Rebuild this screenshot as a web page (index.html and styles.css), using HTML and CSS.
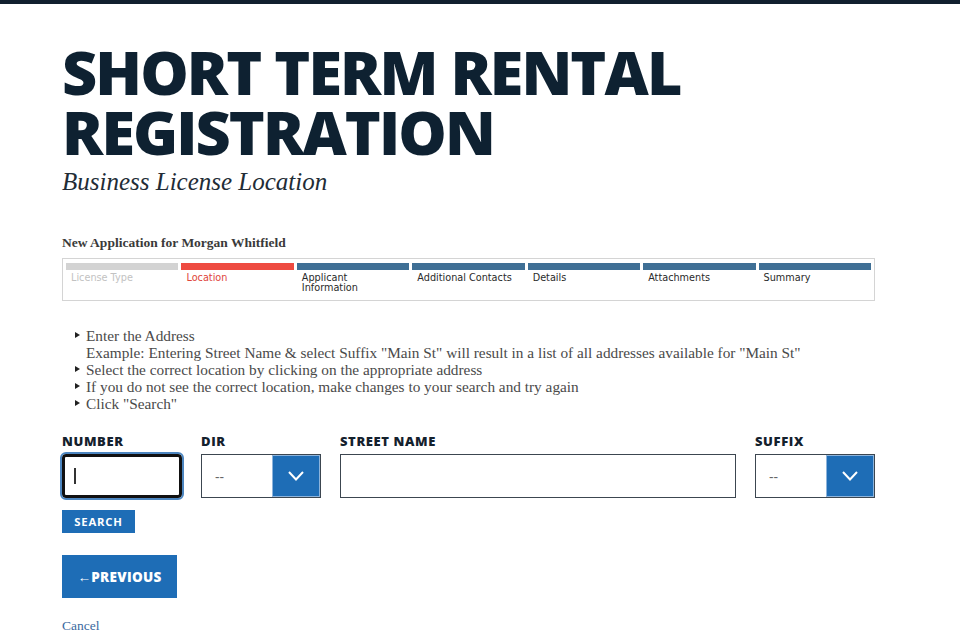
FILE: index.html
```html
<!DOCTYPE html>
<html lang="en">
<head>
<meta charset="utf-8">
<title>Short Term Rental Registration</title>
<link rel="stylesheet" href="styles.css">
</head>
<body>
<div class="topbar"></div>
<main class="page">
  <h1 class="title">SHORT TERM RENTAL<br>REGISTRATION</h1>
  <p class="subtitle">Business License Location</p>

  <p class="app-name">New Application for Morgan Whitfield</p>
  <div class="stepper">
    <div class="step done"><span class="bar"></span><span class="label">License Type</span></div>
    <div class="step current"><span class="bar"></span><span class="label">Location</span></div>
    <div class="step"><span class="bar"></span><span class="label">Applicant<br>Information</span></div>
    <div class="step"><span class="bar"></span><span class="label">Additional Contacts</span></div>
    <div class="step"><span class="bar"></span><span class="label">Details</span></div>
    <div class="step"><span class="bar"></span><span class="label">Attachments</span></div>
    <div class="step"><span class="bar"></span><span class="label">Summary</span></div>
  </div>

  <ul class="instructions">
    <li>Enter the Address<br>Example: Entering Street Name &amp; select Suffix "Main St" will result in a list of all addresses available for "Main St"</li>
    <li>Select the correct location by clicking on the appropriate address</li>
    <li>If you do not see the correct location, make changes to your search and try again</li>
    <li>Click "Search"</li>
  </ul>

  <div class="fields">
    <div class="field">
      <label class="field-label">NUMBER</label>
      <div class="input focused"><span class="caret"></span></div>
    </div>
    <div class="field">
      <label class="field-label">DIR</label>
      <div class="select"><span class="select-value">--</span><span class="select-btn"><svg width="18" height="12" viewBox="0 0 18 12"><path d="M2 2 L9 9.5 L16 2" fill="none" stroke="#fff" stroke-width="2"/></svg></span></div>
    </div>
    <div class="field">
      <label class="field-label">STREET NAME</label>
      <div class="input"></div>
    </div>
    <div class="field">
      <label class="field-label">SUFFIX</label>
      <div class="select"><span class="select-value">--</span><span class="select-btn"><svg width="18" height="12" viewBox="0 0 18 12"><path d="M2 2 L9 9.5 L16 2" fill="none" stroke="#fff" stroke-width="2"/></svg></span></div>
    </div>
  </div>

  <button class="btn-search">SEARCH</button>
  <div class="nav">
    <button class="btn-prev">&larr;PREVIOUS</button>
  </div>
  <a class="cancel" href="#">Cancel</a>
</main>
</body>
</html>
```

FILE: styles.css
```css
* { box-sizing: border-box; }
body {
  margin: 0;
  background: #fff;
  font-family: "Open Sans", "Liberation Sans", sans-serif;
  color: #1b2733;
}
.topbar {
  height: 4px;
  background: #11202e;
}
.page {
  width: 813px;
  margin-left: 62px;
  padding-top: 38px;
}
.title {
  margin: 0;
  font-family: "Open Sans", sans-serif;
  font-weight: 800;
  font-size: 61px;
  line-height: 60px;
  letter-spacing: -1.9px;
  color: #0e2131;
}
.subtitle {
  margin: 6px 0 0;
  font-family: "Liberation Serif", serif;
  font-style: italic;
  font-size: 25px;
  line-height: 28px;
  color: #222c36;
}
.app-name {
  margin: 39px 0 0;
  font-family: "Liberation Serif", serif;
  font-weight: bold;
  font-size: 13.5px;
  line-height: 16px;
  color: #3a3a3a;
}
.stepper {
  margin-top: 7px;
  border: 1px solid #d4d4d4;
  height: 43px;
  padding: 4px 3px 0 3px;
  display: grid;
  grid-template-columns: repeat(7, 1fr);
  column-gap: 3px;
}
.step { display: flex; flex-direction: column; }
.step .bar {
  height: 7px;
  background: #3f6f95;
}
.step .label {
  margin-top: 3px;
  padding-left: 5px;
  font-family: "DejaVu Sans", sans-serif;
  font-size: 9.7px;
  line-height: 10px;
  color: #2a2a2a;
}
.step.done .bar { background: #d3d3d3; }
.step.done .label { color: #c2c2c2; }
.step.current .bar { background: #ee4b41; }
.step.current .label { color: #e0453c; }

.instructions {
  list-style: none;
  margin: 26px 0 0;
  padding: 0 0 0 24px;
  font-family: "Liberation Serif", serif;
  font-size: 15.3px;
  line-height: 17px;
  color: #4a4a4a;
}
.instructions li { position: relative; }
.instructions li::before {
  content: "";
  position: absolute;
  left: -11px;
  top: 5px;
  border-left: 5px solid #222;
  border-top: 3.5px solid transparent;
  border-bottom: 3.5px solid transparent;
}

.fields {
  margin-top: 21px;
  display: grid;
  grid-template-columns: 120px 120px 1fr 120px;
  column-gap: 19px;
}
.field-label {
  display: block;
  font-family: "Open Sans", sans-serif;
  font-weight: 800;
  font-size: 13px;
  letter-spacing: 0.6px;
  line-height: 16px;
  color: #14212d;
  margin-bottom: 5px;
}
.input {
  height: 44px;
  border: 1.5px solid #3c4650;
  background: #fff;
}
.input.focused {
  border: 3px solid #111;
  border-radius: 4px;
  outline: 2px solid #4d86c0;
  outline-offset: 0;
  display: flex;
  align-items: center;
  padding-left: 9px;
}
.caret {
  width: 1.5px;
  height: 16px;
  background: #333;
}
.select {
  height: 44px;
  border: 1.5px solid #3c4650;
  display: flex;
}
.select-value {
  flex: 1;
  display: flex;
  align-items: center;
  padding-left: 13px;
  font-size: 14px;
  color: #666;
}
.select-btn {
  width: 48px;
  background: #1e6db6;
  display: flex;
  align-items: center;
  justify-content: center;
  border: 1px solid #8db4dc;
}
.btn-search {
  display: block;
  margin-top: 12px;
  width: 73px;
  height: 23px;
  border: 0;
  background: #1e6db6;
  color: #fff;
  font-family: "Open Sans", sans-serif;
  font-weight: 700;
  font-size: 11.3px;
  letter-spacing: 0.8px;
  padding: 0;
}
.nav { margin-top: 22px; }
.btn-prev {
  width: 115px;
  height: 43px;
  border: 0;
  background: #1e6db6;
  color: #fff;
  font-family: "Open Sans", sans-serif;
  font-weight: 800;
  font-size: 13.5px;
  letter-spacing: 0.3px;
  padding: 0;
}
.cancel {
  display: inline-block;
  margin-top: 20px;
  font-family: "Liberation Serif", serif;
  font-size: 13.5px;
  color: #3b6aa0;
  text-decoration: none;
}
```
